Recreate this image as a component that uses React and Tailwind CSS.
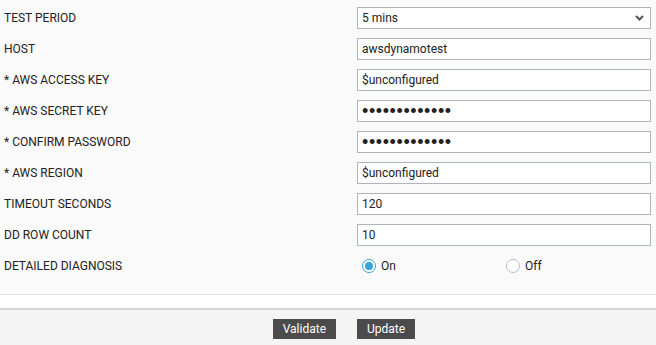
import React, { useState } from 'react';

const Field = ({ label, children }) => (
  <div className="flex h-[31px] items-center">
    <label className="w-[353px] shrink-0 text-[12px] text-[#222]">{label}</label>
    <div className="flex-1">{children}</div>
  </div>
);

const TextBox = ({ value }) => (
  <input
    type="text"
    readOnly
    value={value}
    className="block h-[22px] w-full border border-[#aeb3bd] bg-white px-[4px] text-[12px] text-[#222] outline-none"
  />
);

const Secret = () => (
  <div className="flex h-[22px] w-full items-center border border-[#aeb3bd] bg-white px-[4px] font-['Liberation_Sans',sans-serif] text-[18px] leading-none tracking-[0.6px] text-[#222]">
    •••••••••••••
  </div>
);

const Radio = ({ checked, label, onClick }) => (
  <button type="button" onClick={onClick} className="flex items-center gap-[5px] text-[12px] text-[#222]">
    <span className={`flex h-[14px] w-[14px] items-center justify-center rounded-full border bg-white ${checked ? 'border-[#39a3dc]' : 'border-[#b9bdc5]'}`}>
      {checked && <span className="h-[8px] w-[8px] rounded-full bg-[#39a3dc]"></span>}
    </span>
    {label}
  </button>
);

export default function App() {
  const [diag, setDiag] = useState(true);

  return (
    <div className="h-[345px] w-[656px] overflow-hidden bg-white font-['Roboto',sans-serif]">
      <div className="border-b border-[#e2e2e2] bg-[#fafafa] pb-[13px] pl-1 pr-[5px] pt-[2px]">
        <Field label="TEST PERIOD">
          <div className="relative">
            <select className="block h-[22px] w-full appearance-none border border-[#aeb3bd] bg-white px-[4px] text-[12px] text-[#222] outline-none">
              <option>5 mins</option>
            </select>
            <svg className="pointer-events-none absolute right-[7px] top-[8px]" width="9" height="6" viewBox="0 0 9 6">
              <path d="M1 1l3.5 3.5L8 1" fill="none" stroke="#555" strokeWidth="2" />
            </svg>
          </div>
        </Field>
        <Field label="HOST"><TextBox value="awsdynamotest" /></Field>
        <Field label="* AWS ACCESS KEY"><TextBox value="$unconfigured" /></Field>
        <Field label="* AWS SECRET KEY"><Secret /></Field>
        <Field label="* CONFIRM PASSWORD"><Secret /></Field>
        <Field label="* AWS REGION"><TextBox value="$unconfigured" /></Field>
        <Field label="TIMEOUT SECONDS"><TextBox value="120" /></Field>
        <Field label="DD ROW COUNT"><TextBox value="10" /></Field>
        <Field label="DETAILED DIAGNOSIS">
          <div className="flex pl-[5px]">
            <div className="w-[144px]">
              <Radio checked={diag} label="On" onClick={() => setDiag(true)} />
            </div>
            <Radio checked={!diag} label="Off" onClick={() => setDiag(false)} />
          </div>
        </Field>
      </div>
      <div className="h-[15px] border-b-2 border-[#d6d6d6] bg-white"></div>
      <div className="flex h-[40px] items-start bg-[#f4f4f4] pl-1 pt-[9px]">
        <div className="flex w-[353px] justify-end pr-[21px]">
          <button className="h-[20px] bg-[#4b4b4b] px-[10px] text-[12px] text-white">Validate</button>
        </div>
        <button className="h-[20px] bg-[#4b4b4b] px-[10px] text-[12px] text-white">Update</button>
      </div>
    </div>
  );
}
